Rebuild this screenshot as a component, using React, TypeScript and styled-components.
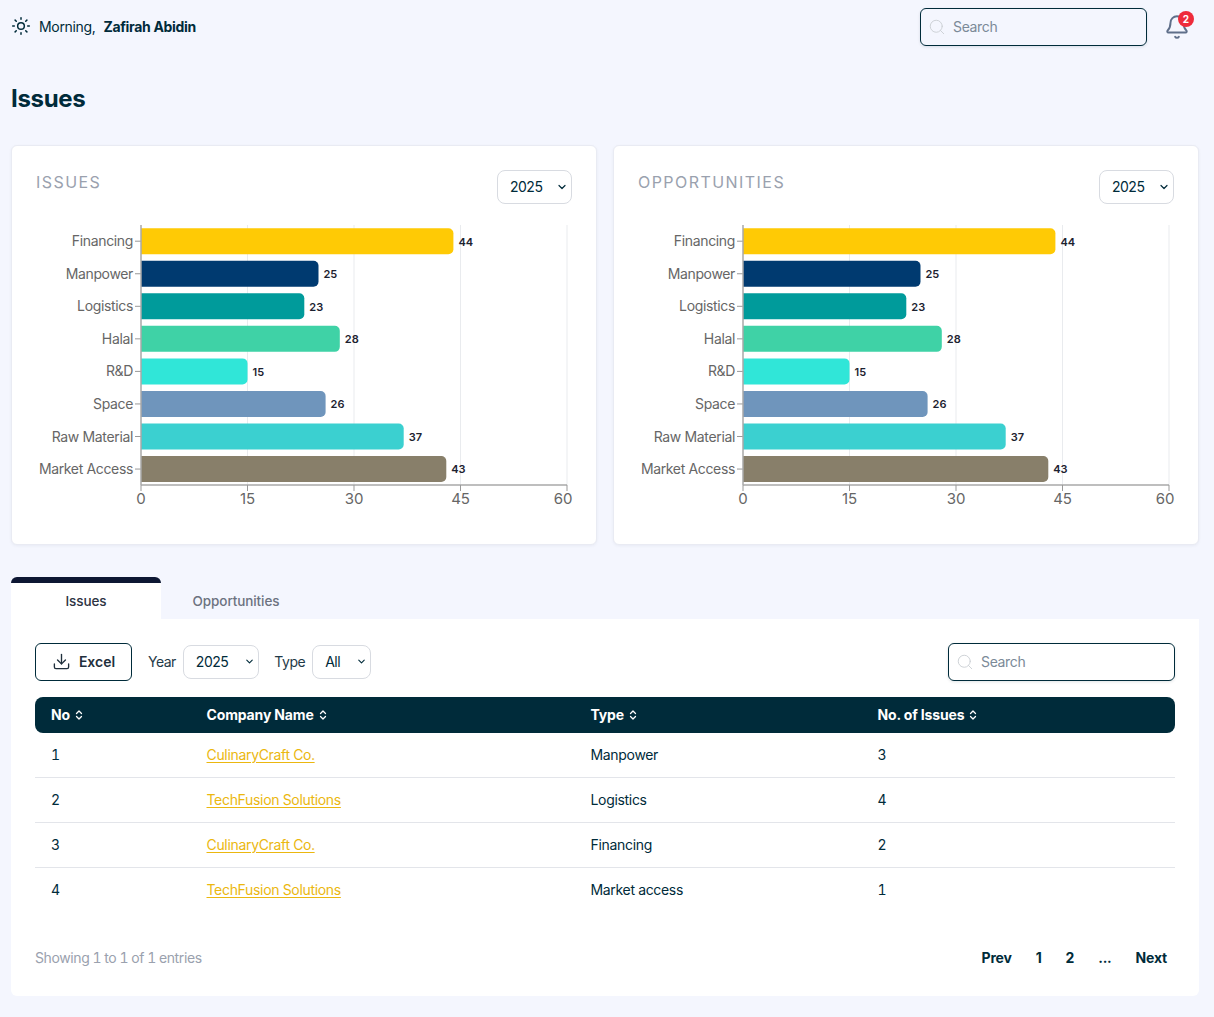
import React from "react";
import styled, { createGlobalStyle } from "styled-components";
import { Sun, Search, Bell, ChevronDown, Download, ChevronsUpDown } from "lucide-react";

const Global = createGlobalStyle`
  * { box-sizing: border-box; }
  html, body { margin: 0; padding: 0; background: #f4f6fe; }
  body { font-family: Inter, "Liberation Sans", sans-serif; color: #002b3a; }
`;

const Page = styled.div`
  width: 1214px;
  height: 1017px;
  padding: 0 15px 0 11px;
  overflow: hidden;
`;
const TopBar = styled.header`
  height: 54px;
  display: flex;
  align-items: center;
  justify-content: space-between;
`;
const Greeting = styled.div`
  display: flex;
  align-items: center;
  font-size: 14px;
  letter-spacing: -0.33px;
  color: #002b3a;
  padding: 0 0 2px 0;
  svg { margin-right: 8px; }
  strong { margin-left: 8px; font-weight: 700; }
`;
const TopRight = styled.div`
  display: flex;
  align-items: center;
  gap: 15px;
  padding-right: 7px;
`;
const SearchBox = styled.div<{ $w: number }>`
  width: ${(p) => p.$w}px;
  height: 38px;
  display: flex;
  align-items: center;
  gap: 7px;
  padding: 0 0 0 7px;
  border: 1px solid #002b3a;
  border-radius: 6px;
  box-shadow: 0 1px 3px rgba(0, 43, 58, 0.12);
  font-size: 14px;
  letter-spacing: -0.35px;
  color: #7b8a98;
  & > span { position: relative; top: -1px; }
`;
const BellWrap = styled.div`
  position: relative;
  width: 30px;
  height: 30px;
  display: flex;
  align-items: center;
  justify-content: center;
  color: #5f6f8a;
`;
const Badge = styled.span`
  position: absolute;
  top: -1px;
  right: -2px;
  width: 16px;
  height: 16px;
  border-radius: 50%;
  background: #ee2b3b;
  color: #fff;
  font-size: 10px;
  font-weight: 700;
  display: flex;
  align-items: center;
  justify-content: center;
`;
const Title = styled.h1`
  margin: 28px 0 30px;
  font-size: 24px;
  line-height: 33px;
  font-weight: 700;
  letter-spacing: -0.3px;
  color: #002b3a;
`;
const Charts = styled.section`
  display: grid;
  grid-template-columns: 586px 586px;
  gap: 16px;
`;
const Card = styled.div`
  height: 400px;
  background: #fff;
  border: 1px solid #e9ebf3;
  border-radius: 6px;
  box-shadow: 0 1px 3px rgba(40, 50, 90, 0.06);
  padding: 24px 24px 0;
`;
const CardHead = styled.div`
  height: 55px;
  display: flex;
  justify-content: space-between;
  align-items: flex-start;
`;
const CardTitle = styled.h2`
  margin: 3px 0 0;
  font-size: 16px;
  line-height: 19px;
  font-weight: 400;
  letter-spacing: 1.45px;
  color: #9aa1ae;
`;
const Select = styled.div<{ $w: number }>`
  width: ${(p) => p.$w}px;
  height: 34px;
  border: 1px solid #d8dbe1;
  border-radius: 8px;
  background: #fff;
  display: flex;
  align-items: center;
  justify-content: space-between;
  padding: 0 3px 1px 12px;
  font-size: 14px;
  letter-spacing: -0.5px;
  color: #002b3a;
`;
const ChartSvg = styled.svg`
  display: block;
  margin: 0 0 0 -24px;
`;
const TabRow = styled.div`
  margin-top: 32px;
  display: flex;
  height: 42px;
`;
const Tab = styled.div<{ $active?: boolean }>`
  width: 150px;
  display: flex;
  align-items: center;
  justify-content: center;
  font-size: 13.5px;
  font-weight: 500;
  letter-spacing: -0.1px;
  border-radius: 6px 6px 0 0;
  background: ${(p) => (p.$active ? "#fff" : "transparent")};
  border-top: ${(p) => (p.$active ? "6px solid #0d1733" : "6px solid transparent")};
  color: ${(p) => (p.$active ? "#2c3342" : "#6c7280")};
`;
const Panel = styled.section`
  width: 1188px;
  height: 377px;
  background: #fff;
  border-radius: 0 0 6px 6px;
  padding: 24px 24px 0;
`;
const Toolbar = styled.div`
  height: 38px;
  display: flex;
  align-items: center;
  gap: 7px;
`;
const ExcelButton = styled.button`
  width: 97px;
  height: 38px;
  margin-right: 9px;
  padding: 0 0 1px;
  background: #fff;
  border: 1px solid #002b3a;
  border-radius: 6px;
  display: flex;
  align-items: center;
  justify-content: center;
  gap: 8px;
  font-family: inherit;
  font-size: 14px;
  font-weight: 600;
  color: #1f2f3c;
`;
const FieldLabel = styled.span`
  font-size: 14px;
  letter-spacing: -0.5px;
  color: #1f3a48;
  padding-bottom: 1px;
`;
const Spacer = styled.div`
  flex: 1;
`;
const FieldGap = styled.div`
  width: 1.5px;
`;
const Table = styled.div`
  margin-top: 16px;
`;
const RowGrid = styled.div`
  display: grid;
  grid-template-columns: 155.5px 384px 287px 1fr;
  align-items: center;
  padding-left: 16px;
`;
const HeadRow = styled(RowGrid)`
  height: 36px;
  padding-bottom: 1px;
  background: #002b3a;
  border-radius: 8px;
  color: #fff;
  font-size: 14px;
  font-weight: 700;
  letter-spacing: -0.15px;
`;
const HeadCell = styled.div`
  display: flex;
  align-items: center;
  gap: 3px;
`;
const BodyRow = styled(RowGrid)<{ $last?: boolean }>`
  height: 45px;
  padding-bottom: 2px;
  font-size: 14px;
  letter-spacing: -0.32px;
  color: #002b3a;
  font-feature-settings: "tnum";
  border-bottom: ${(p) => (p.$last ? "none" : "1px solid #e3e5ea")};
`;
const CompanyLink = styled.a`
  color: #ebb70f;
  text-decoration: underline;
  text-underline-offset: 2px;
`;
const Footer = styled.div`
  margin-top: 32px;
  display: flex;
  justify-content: space-between;
  align-items: center;
  height: 24px;
`;
const Showing = styled.span`
  font-size: 14px;
  letter-spacing: -0.25px;
  color: #9aa1ae;
  font-feature-settings: "tnum";
  word-spacing: -0.3px;
  letter-spacing: -0.38px;
`;
const Pager = styled.nav`
  display: flex;
  align-items: center;
  gap: 24px;
  padding-right: 8px;
  font-size: 14px;
  font-weight: 700;
  letter-spacing: -0.2px;
  color: #002b3a;
`;

const data: [string, number, string][] = [
  ["Financing", 44, "#ffca05"],
  ["Manpower", 25, "#003a70"],
  ["Logistics", 23, "#009b9b"],
  ["Halal", 28, "#3fd2a6"],
  ["R&D", 15, "#30e6d8"],
  ["Space", 26, "#6f95bc"],
  ["Raw Material", 37, "#3bd0d0"],
  ["Market Access", 43, "#887f6a"],
];

const X0 = 129;
const SCALE = 7.1;
const BAND = 32.55;

const BarChart = () => (
  <ChartSvg width="584" height="300" viewBox="0 0 584 300" fontFamily="Inter, sans-serif">
    {[15, 30, 45, 60].map((t) => (
      <line key={t} x1={X0 + t * SCALE} x2={X0 + t * SCALE} y1={0} y2={260} stroke="#e9ebee" strokeWidth="1" />
    ))}
    {data.map(([name, v, c], i) => {
      const y = BAND * i;
      return (
        <g key={name}>
          <text x={X0 - 8} y={y + 21.2} textAnchor="end" fontSize="14" letterSpacing="-0.35" fill="#666">{name}</text>
          <line x1={X0 - 6} x2={X0} y1={y + 16.2} y2={y + 16.2} stroke="#999" />
          <path
            d={`M${X0} ${y + 3.2}H${X0 + v * SCALE - 5}a5 5 0 0 1 5 5V${y + 24.2}a5 5 0 0 1 -5 5H${X0}Z`}
            fill={c}
          />
          <text x={X0 + v * SCALE + 5} y={y + 20.5} fontSize="11" fontWeight="600" fill="#1c2230">{v}</text>
        </g>
      );
    })}
    <line x1={X0} x2={X0} y1={0} y2={260} stroke="#a8a8a8" strokeWidth="1.5" />
    <line x1={X0} x2={X0 + 60 * SCALE} y1={260} y2={260} stroke="#a8a8a8" strokeWidth="1.5" />
    {[0, 15, 30, 45, 60].map((t) => (
      <g key={t}>
        <line x1={X0 + t * SCALE} x2={X0 + t * SCALE} y1={260} y2={266} stroke="#999" />
        <text x={X0 + t * SCALE - (t === 60 ? 4 : 0)} y={279} textAnchor="middle" fontSize="15" letterSpacing="-0.2" fill="#666">{t}</text>
      </g>
    ))}
  </ChartSvg>
);

const ChartCard = ({ title }: { title: string }) => (
  <Card>
    <CardHead>
      <CardTitle>{title}</CardTitle>
      <Select $w={75}>2025<ChevronDown size={12} strokeWidth={2.4} /></Select>
    </CardHead>
    <BarChart />
  </Card>
);

const rows: [number, string, string, number][] = [
  [1, "CulinaryCraft Co.", "Manpower", 3],
  [2, "TechFusion Solutions", "Logistics", 4],
  [3, "CulinaryCraft Co.", "Financing", 2],
  [4, "TechFusion Solutions", "Market access", 1],
];

const SortIcon = () => <ChevronsUpDown size={12} strokeWidth={2.6} />;

export default function App() {
  return (
    <Page>
      <Global />
      <TopBar>
        <Greeting>
          <Sun size={20} strokeWidth={1.8} />
          Morning, <strong>Zafirah Abidin</strong>
        </Greeting>
        <TopRight>
          <SearchBox $w={227}>
            <Search size={18} strokeWidth={1.2} color="#c9ced3" />
            <span>Search</span>
          </SearchBox>
          <BellWrap>
            <Bell size={26} strokeWidth={1.8} />
            <Badge>2</Badge>
          </BellWrap>
        </TopRight>
      </TopBar>
      <Title>Issues</Title>
      <Charts>
        <ChartCard title="ISSUES" />
        <ChartCard title="OPPORTUNITIES" />
      </Charts>
      <TabRow>
        <Tab $active>Issues</Tab>
        <Tab>Opportunities</Tab>
      </TabRow>
      <Panel>
        <Toolbar>
          <ExcelButton><Download size={19} strokeWidth={1.7} />Excel</ExcelButton>
          <FieldLabel>Year</FieldLabel>
          <Select $w={76}>2025<ChevronDown size={11} strokeWidth={2.4} /></Select>
          <FieldGap />
          <FieldLabel>Type</FieldLabel>
          <Select $w={59}>All<ChevronDown size={11} strokeWidth={2.4} /></Select>
          <Spacer />
          <SearchBox $w={227}>
            <Search size={18} strokeWidth={1.2} color="#c9ced3" />
            <span>Search</span>
          </SearchBox>
        </Toolbar>
        <Table>
          <HeadRow>
            <HeadCell>No <SortIcon /></HeadCell>
            <HeadCell>Company Name <SortIcon /></HeadCell>
            <HeadCell>Type <SortIcon /></HeadCell>
            <HeadCell>No. of Issues <SortIcon /></HeadCell>
          </HeadRow>
          {rows.map(([n, c, t, q], i) => (
            <BodyRow key={n} $last={i === rows.length - 1}>
              <div>{n}</div>
              <div><CompanyLink>{c}</CompanyLink></div>
              <div>{t}</div>
              <div>{q}</div>
            </BodyRow>
          ))}
        </Table>
        <Footer>
          <Showing>Showing 1 to 1 of 1 entries</Showing>
          <Pager>
            <span>Prev</span><span>1</span><span>2</span><span>...</span><span>Next</span>
          </Pager>
        </Footer>
      </Panel>
    </Page>
  );
}
